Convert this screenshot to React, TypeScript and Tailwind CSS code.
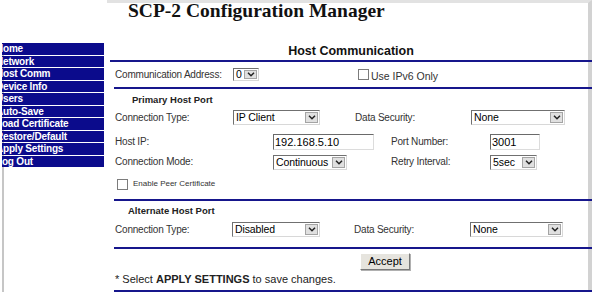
import React from "react";

const NAV = [
  "Home",
  "Network",
  "Host Comm",
  "Device Info",
  "Users",
  "Auto-Save",
  "Load Certificate",
  "Restore/Default",
  "Apply Settings",
  "Log Out",
];

const sans = { fontFamily: '"Liberation Sans", Arial, sans-serif' };

// --- small form widgets, old-school sunken look ---
function Chevron() {
  return (
    <svg width="8" height="5" viewBox="0 0 8 5">
      <path d="M1 0.8 L4 3.8 L7 0.8" fill="none" stroke="#222" strokeWidth="1.5" />
    </svg>
  );
}

function Select({ value, className }: { value: string; className: string }) {
  return (
    <div className={`flex shrink-0 border border-t-[#707070] border-l-[#707070] border-b-[#d8d8d8] border-r-[#d8d8d8] bg-white ${className}`}>
      <span className="flex-1 self-center overflow-hidden whitespace-nowrap pl-[2px] text-[10.5px] leading-none tracking-[-0.1px] text-black">{value}</span>
      <span className="m-[1px] flex w-[13px] items-center justify-center border border-[#a4a4a4] bg-[#e0e0e0]">
        <Chevron />
      </span>
    </div>
  );
}

function Field({ value, className }: { value: string; className: string }) {
  return (
    <div className={`flex shrink-0 items-center border border-t-[#6a6a6a] border-l-[#6a6a6a] border-b-[#dcdcdc] border-r-[#dcdcdc] bg-white pl-[1px] text-[11px] leading-none text-black ${className}`}>
      {value}
    </div>
  );
}

function Check({ className = "" }: { className?: string }) {
  return <span className={`block h-[11px] w-[11px] shrink-0 border border-[#7c7c7c] bg-white ${className}`} />;
}

const Rule = ({ className = "" }: { className?: string }) => <div className={`h-[2px] bg-[#16168c] ${className}`} />;

const lbl = "shrink-0 text-[10px] leading-none tracking-[-0.2px] text-[#333]";

export default function App() {
  return (
    <div className="flex h-[292px] w-[592px] overflow-hidden bg-white" style={sans}>
      {/* left nav frame */}
      <div className="w-[107px] shrink-0 pt-[31px]">
        <div className="ml-[2px] h-full border-l-2 border-[#c6c6c6]">
          <div className="-ml-[2px] mt-[12px] w-[102px]">
            {NAV.map((item, i) => (
              <div
                key={item}
                className={`mb-[1px] flex items-center overflow-hidden bg-[#0b0b8c] ${i % 2 ? "h-[11px]" : "h-[12px]"}`}
              >
                <span className="-ml-[6px] whitespace-nowrap text-[10px] font-bold leading-none tracking-[-0.2px] text-white">
                  {item}
                </span>
              </div>
            ))}
          </div>
        </div>
      </div>

      {/* main frame */}
      <div className="w-[485px] shrink-0 border-t-[3px] border-r-[4px] border-t-[#e2e2e2] border-r-[#d2d2d2]">
        <h1
          className="pl-[21px] text-[19.5px] font-bold leading-[16px] text-[#111]"
          style={{ fontFamily: '"Liberation Serif", "Times New Roman", serif' }}
        >
          SCP-2 Configuration Manager
        </h1>

        <div className="-mr-[4px] ml-[3px]">
          <div className="flex h-[41px] items-end justify-center pb-[1px]">
            <span className="text-[12.5px] font-bold leading-[15px] text-[#111]">Host Communication</span>
          </div>
          <Rule />

          <div className="ml-[4px]">
            <div className="flex h-[25px] items-center">
              <span className={`${lbl} w-[119px] pl-[1px]`}>Communication Address:</span>
              <Select value="0" className="h-[13px] w-[26px]" />
              <Check className="ml-[99px]" />
              <span className="ml-[2px] mt-[3px] text-[10.5px] leading-none text-[#333]">Use IPv6 Only</span>
            </div>
            <Rule />

            <div className="mt-[5px] flex h-[12px] items-center pl-[18px]">
              <span className="text-[9.5px] font-bold leading-none text-[#222]">Primary Host Port</span>
            </div>

            <div className="mt-[4px] flex h-[15px] items-center">
              <span className={`${lbl} w-[119px] pl-[1px]`}>Connection Type:</span>
              <Select value="IP Client" className="h-[15px] w-[87px]" />
              <span className={`${lbl} ml-[35px] w-[116px]`}>Data Security:</span>
              <Select value="None" className="h-[15px] w-[94px]" />
            </div>

            <div className="mt-[9px] flex h-[16px] items-center">
              <span className={`${lbl} w-[159px] pl-[1px]`}>Host IP:</span>
              <Field value="192.168.5.10" className="h-[16px] w-[101px]" />
              <span className={`${lbl} ml-[17px] w-[99px]`}>Port Number:</span>
              <Field value="3001" className="h-[16px] w-[50px]" />
            </div>

            <div className="mt-[4px] flex h-[16px] items-center">
              <span className={`${lbl} w-[159px] pl-[1px]`}>Connection Mode:</span>
              <Select value="Continuous" className="h-[15px] w-[74px]" />
              <span className={`${lbl} ml-[44px] w-[99px]`}>Retry Interval:</span>
              <Select value="5sec" className="h-[15px] w-[47px]" />
            </div>

            <div className="mt-[8px] flex h-[12px] items-center pl-[3px]">
              <Check />
              <span className="ml-[5px] text-[8px] leading-none text-[#333]">Enable Peer Certificate</span>
            </div>

            <Rule className="mt-[9px]" />

            <div className="mt-[4px] flex h-[12px] items-center pl-[14px]">
              <span className="text-[9.5px] font-bold leading-none text-[#222]">Alternate Host Port</span>
            </div>

            <div className="mt-[5px] flex h-[15px] items-center">
              <span className={`${lbl} w-[118px] pl-[1px]`}>Connection Type:</span>
              <Select value="Disabled" className="h-[15px] w-[88px]" />
              <span className={`${lbl} ml-[34px] w-[116px]`}>Data Security:</span>
              <Select value="None" className="h-[15px] w-[93px]" />
            </div>

            <Rule className="mt-[10px]" />

            <div className="mt-[4px] flex">
              <button className="ml-[246px] h-[17px] w-[50px] border border-t-white border-l-white border-b-[#7a7a7a] border-r-[#7a7a7a] bg-[#e6e4de] text-[11px] leading-none text-black shadow-[1px_1px_0_#b0b0b0]">
                Accept
              </button>
            </div>

            <div className="mt-[3px] flex h-[12px] items-center pl-[1px] text-[11px] leading-none text-[#222]">
              <span className="whitespace-pre">* Select </span>
              <b>APPLY SETTINGS</b>
              <span className="whitespace-pre"> to save changes.</span>
            </div>

            <Rule className="mt-[5px]" />
          </div>
        </div>
      </div>
    </div>
  );
}
